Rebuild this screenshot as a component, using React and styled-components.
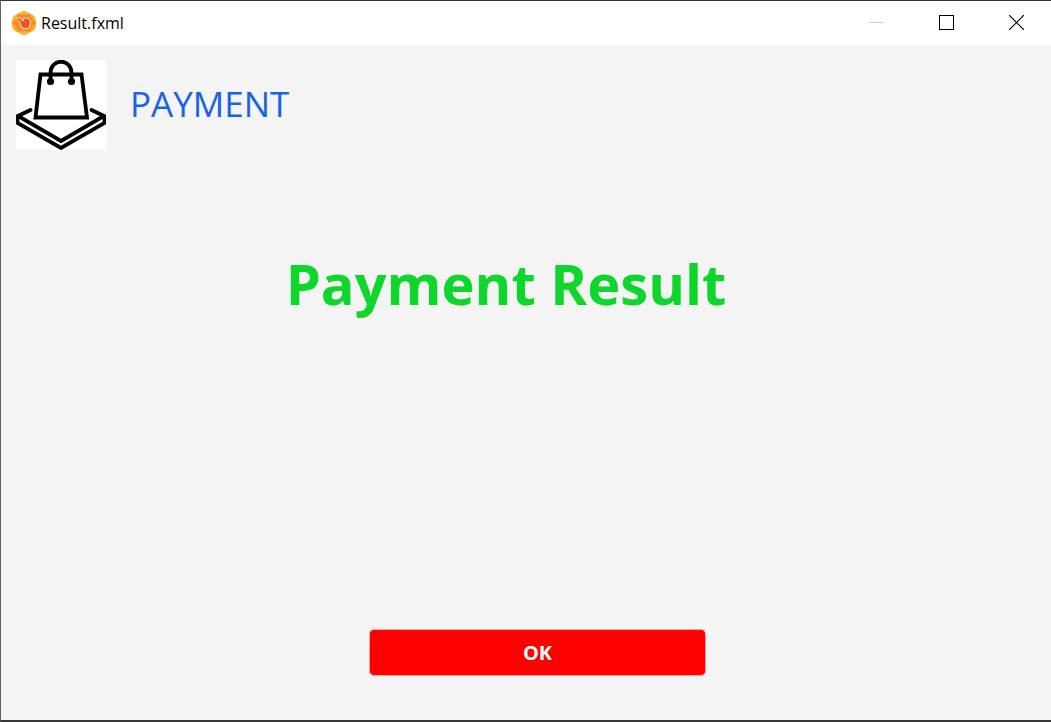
import React from "react";
import styled, { createGlobalStyle } from "styled-components";

const GlobalStyle = createGlobalStyle`
  * { box-sizing: border-box; }
  body {
    margin: 0;
    font-family: "Segoe UI", "Open Sans", "Noto Sans", sans-serif;
  }
`;

const Window = styled.div`
  display: flex;
  flex-direction: column;
  min-height: 100vh;
  background: #f4f4f4;
  border-top: 1px solid #353336;
  border-left: 1px solid #636363;
  border-bottom: 2px solid #37383a;
`;

const TitleBar = styled.header`
  display: flex;
  align-items: center;
  height: 44px;
  padding-left: 11px;
  background: #ffffff;
`;

const AppIcon = styled.svg`
  width: 24px;
  height: 26px;
  margin-right: 5px;
`;

const WindowTitle = styled.span`
  flex: 1;
  font-size: 16px;
  line-height: 24px;
  color: #000000;
`;

const WindowButton = styled.button`
  display: flex;
  align-items: center;
  justify-content: center;
  width: 70px;
  height: 43px;
  padding: 0;
  border: 0;
  background: transparent;
  color: ${({ disabled }) => (disabled ? "#cccccc" : "#000000")};

  svg {
    width: 15px;
    height: 15px;
  }
`;

const WindowControls = styled.div`
  display: flex;
  align-self: flex-start;
`;

const Content = styled.main`
  display: flex;
  flex: 1;
  flex-direction: column;
  padding: 15px 15px 44px;
`;

const Brand = styled.div`
  display: flex;
  align-items: center;
  gap: 24px;
`;

const Logo = styled.svg`
  width: 90px;
  height: 90px;
  background: #ffffff;
`;

const Heading = styled.h1`
  margin: 0;
  padding-bottom: 2px;
  font-size: 35px;
  font-weight: 400;
  line-height: 48px;
  color: #1a63e4;
`;

const Result = styled.p`
  margin: 93px 40px 0 0;
  font-size: 56px;
  font-weight: 700;
  line-height: 80px;
  text-align: center;
  color: #0fd62b;
`;

const Actions = styled.div`
  display: flex;
  justify-content: center;
  margin-top: auto;
  padding-left: 23px;
`;

const OkButton = styled.button`
  width: 337px;
  height: 47px;
  padding: 0;
  border: 1px solid #f9a0a0;
  border-radius: 5px;
  background: #ff0000;
  color: #ffffff;
  font-family: inherit;
  font-size: 20px;
  font-weight: 700;
  line-height: 28px;
`;

function TapIcon() {
  return (
    <AppIcon viewBox="0 0 24 24" aria-hidden="true">
      <path d="M9 1Q12-1 15 1L21 4Q24 6 24 9V15Q24 18 21 20L15 23Q12 25 9 23L3 20Q0 18 0 15V9Q0 6 3 4Z" fill="#fbb030" />
      <path d="M6 3Q12 5 18 3Q19 8 24 12Q19 16 18 21Q12 19 6 21Q5 16 0 12Q5 8 6 3Z" fill="#fa8b1c" />
      <path
        d="M5 7.500Q5.300 6.200 6.800 6.800L11.200 10L12 9L10.800 7.800Q11 6.700 12.500 7L14.300 7.600L16 7.300L17.300 8.500L18.300 10.500Q18.800 13 17.800 15.500L15.800 17.500L10.800 17.300Q9.600 16.800 10.200 15.700L8.600 15.300Q7.900 14.400 8.900 13.500L8 12.700L8.400 11.700L5.300 8.900Z"
        fill="#f4511e"
        stroke="#fff3e8"
        strokeWidth="1"
        strokeLinejoin="round"
      />
    </AppIcon>
  );
}

function BagLogo() {
  return (
    <Logo viewBox="0 0 90 90" role="img" aria-label="Shopping bag">
      <g fill="none" stroke="#000000" strokeWidth="3.800">
        <path d="M24.500 14.500H65.500L71 57.500H19.500Z" />
        <path d="M34.500 21V13C34.500 -2 55.500 -2 55.500 13V21" />
        <path d="M14.500 50L2 56L45 81L88 56L75.500 50" strokeLinecap="round" />
        <path d="M1.500 56V63L45 88L88.500 63V56" />
      </g>
      <circle cx="34.500" cy="21.500" r="3.600" />
      <circle cx="55.500" cy="21.500" r="3.600" />
    </Logo>
  );
}

export default function App() {
  return (
    <>
      <GlobalStyle />
      <Window>
        <TitleBar>
          <TapIcon />
          <WindowTitle>Result.fxml</WindowTitle>
          <WindowControls>
            <WindowButton type="button" aria-label="Minimize" disabled>
              <svg viewBox="0 0 15 15" shapeRendering="crispEdges">
                <path d="M0 7.500H15" stroke="currentColor" />
              </svg>
            </WindowButton>
            <WindowButton type="button" aria-label="Maximize">
              <svg viewBox="0 0 15 15" shapeRendering="crispEdges">
                <path d="M.5 .5H14.500V14.500H.5Z" fill="none" stroke="currentColor" />
              </svg>
            </WindowButton>
            <WindowButton type="button" aria-label="Close">
              <svg viewBox="0 0 15 15">
                <path d="M0 0L15 15M15 0L0 15" stroke="currentColor" strokeWidth="1.200" />
              </svg>
            </WindowButton>
          </WindowControls>
        </TitleBar>
        <Content>
          <Brand>
            <BagLogo />
            <Heading>PAYMENT</Heading>
          </Brand>
          <Result>Payment Result</Result>
          <Actions>
            <OkButton type="button">OK</OkButton>
          </Actions>
        </Content>
      </Window>
    </>
  );
}
